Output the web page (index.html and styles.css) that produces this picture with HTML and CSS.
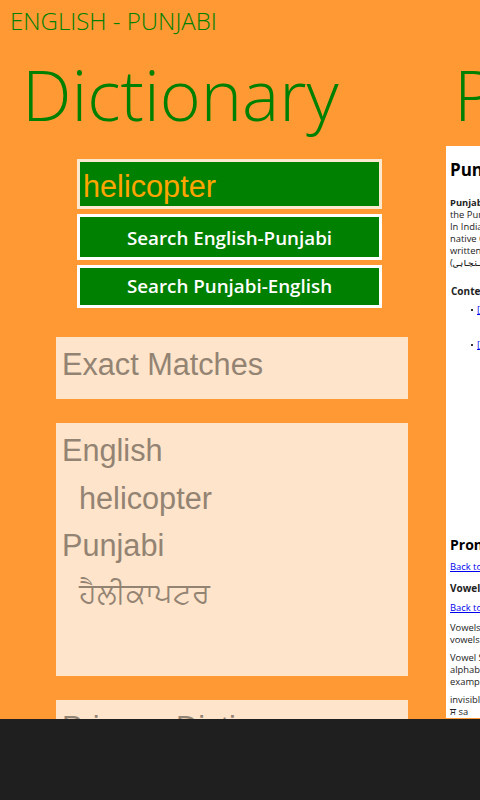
FILE: index.html
```html
<!DOCTYPE html>
<html>
<head>
    <title>English - Punjabi Dictionary</title>
    <link rel="stylesheet" href="styles.css">
</head>
<body>
    <div class="app">
        <div class="hub">
            <div class="hub-title">ENGLISH - PUNJABI</div>
            <div class="hub-sections">
                <div class="section">
                    <h1 class="section-title">Dictionary</h1>
                    <div class="search">
                        <input class="search-box" type="text" value="helicopter">
                        <button class="search-button">Search English-Punjabi</button>
                        <button class="search-button">Search Punjabi-English</button>
                    </div>
                    <div class="results">
                        <div class="panel panel-exact">
                            <div class="panel-heading">Exact Matches</div>
                        </div>
                        <div class="panel panel-entry">
                            <div class="panel-heading">English</div>
                            <div class="panel-value">helicopter</div>
                            <div class="panel-heading">Punjabi</div>
                            <div class="panel-value panel-value-pa" lang="pa">ਹੈਲੀਕਾਪਟਰ</div>
                        </div>
                        <div class="panel panel-more">
                            <div class="panel-heading">Primary Dictionary</div>
                        </div>
                    </div>
                </div>
                <div class="section section-article">
                    <h1 class="section-title">Punjabi</h1>
                    <div class="article">
                        <h2>Punjabi</h2>
                        <p><b>Punjabi</b> is a language of<br>the Punjab region.<br>In India it is written in the<br>native Gurmukhi script,<br>written in Pakistan as<br><span lang="ur">(پنجابی)</span></p>
                        <div class="contents">
                            <h3>Contents</h3>
                            <ul>
                                <li><a href="#">[+] Pronunciation</a></li>
                                <li><a href="#">[+] Grammar</a></li>
                            </ul>
                        </div>
                        <h2 class="article-sub">Pronunciation</h2>
                        <p class="back-link"><a href="#">Back to contents</a></p>
                        <h4>Vowels</h4>
                        <p class="back-link"><a href="#">Back to contents</a></p>
                        <p>Vowels are written with<br>vowels signs.</p>
                        <p>Vowel Signs of the<br>alphabet are shown, for<br>example:</p>
                        <p>invisible a follows<br>ਸ sa</p>
                    </div>
                </div>
            </div>
        </div>
        <div class="app-bar"></div>
    </div>
</body>
</html>
```
FILE: styles.css
```css
body {
    margin: 0;
    padding: 0;
    font-family: "Open Sans", sans-serif;
}

.app {
    width: 480px;
    height: 800px;
    display: flex;
    flex-direction: column;
    overflow: hidden;
    background-color: #ff9933;
}

.hub {
    height: 719px;
    flex: none;
    overflow: hidden;
}

.hub-title {
    padding: 4px 0 0 10px;
    height: 36px;
    font-size: 24px;
    line-height: 34px;
    font-weight: 300;
    color: #008000;
}

.hub-sections {
    display: flex;
}

.section {
    width: 446px;
    flex: none;
}

.section-title {
    margin: 0 0 0 22px;
    height: 107px;
    font-size: 70px;
    line-height: 108px;
    font-weight: 300;
    color: #008000;
    white-space: nowrap;
}

.search {
    width: 305px;
    margin: 12px 0 0 77px;
    display: flex;
    flex-direction: column;
    gap: 5px;
}

.search-box {
    box-sizing: border-box;
    width: 100%;
    height: 50px;
    padding: 4px 3px 0;
    border: 3px solid #fbe8d0;
    background-color: #008000;
    color: #ffa500;
    font-family: "Liberation Sans", sans-serif;
    font-size: 30.67px;
    outline: none;
}

.search-button {
    box-sizing: border-box;
    width: 100%;
    height: 46px;
    padding: 1px 0 0;
    border: 3px solid #fff;
    background-color: #008000;
    color: #fff;
    font-family: "Open Sans", sans-serif;
    font-size: 18.8px;
    font-weight: 600;
}

.search-button:last-child {
    height: 43px;
    padding: 0 0 1px;
}

.results {
    width: 352px;
    margin: 29px 0 0 56px;
    display: flex;
    flex-direction: column;
    gap: 24px;
}

.panel {
    padding: 7px 6px 0;
    background-color: #fee4ca;
    box-sizing: border-box;
}

.panel-exact {
    height: 62px;
}

.panel-entry {
    height: 253px;
}

.panel-more {
    height: 60px;
}

.panel-heading {
    height: 47.5px;
    font-family: "Liberation Sans", sans-serif;
    font-size: 30.67px;
    line-height: 40px;
    color: #938373;
}

.panel-value {
    height: 47.5px;
    padding-left: 17px;
    font-family: "Liberation Sans", sans-serif;
    font-size: 30.67px;
    line-height: 40px;
    color: #938373;
}

.panel-value-pa {
    font-size: 29px;
    font-family: "Liberation Sans", "Noto Sans", "DejaVu Sans", sans-serif;
}

.section-article {
    width: 400px;
}

.section-article .section-title {
    margin-left: 8px;
}

.article {
    box-sizing: border-box;
    height: 572px;
    margin-top: -1px;
    padding: 14px 4px 0;
    overflow: hidden;
    background-color: #fff;
    color: #222;
    font-size: 9.4px;
    line-height: 12px;
    white-space: nowrap;
}

.article h2 {
    margin: 0 0 17px;
    font-size: 17px;
    line-height: 20px;
    color: #000;
}

.article p {
    margin: 0 0 6px;
}

.article .back-link {
    margin-bottom: 8px;
}

.article a {
    color: #0000ee;
}

.contents {
    margin: 16px 0 0 1px;
    height: 250px;
}

.contents h3 {
    margin: 0 0 7px;
    font-size: 10px;
    line-height: 12px;
}

.contents ul {
    margin: 0;
    padding-left: 20px;
    list-style: none;
}

.contents li {
    height: 35px;
    display: flex;
    gap: 4px;
}

.contents li::before {
    content: "";
    width: 2px;
    height: 2px;
    margin-top: 5px;
    background-color: #333;
}

.article .article-sub {
    margin: 0 0 6px;
    font-size: 14px;
}

.article h4 {
    margin: 9px 0 8px;
    font-size: 10px;
    line-height: 12px;
}

.app-bar {
    flex: 1;
    background-color: #1f1f1f;
}
```
